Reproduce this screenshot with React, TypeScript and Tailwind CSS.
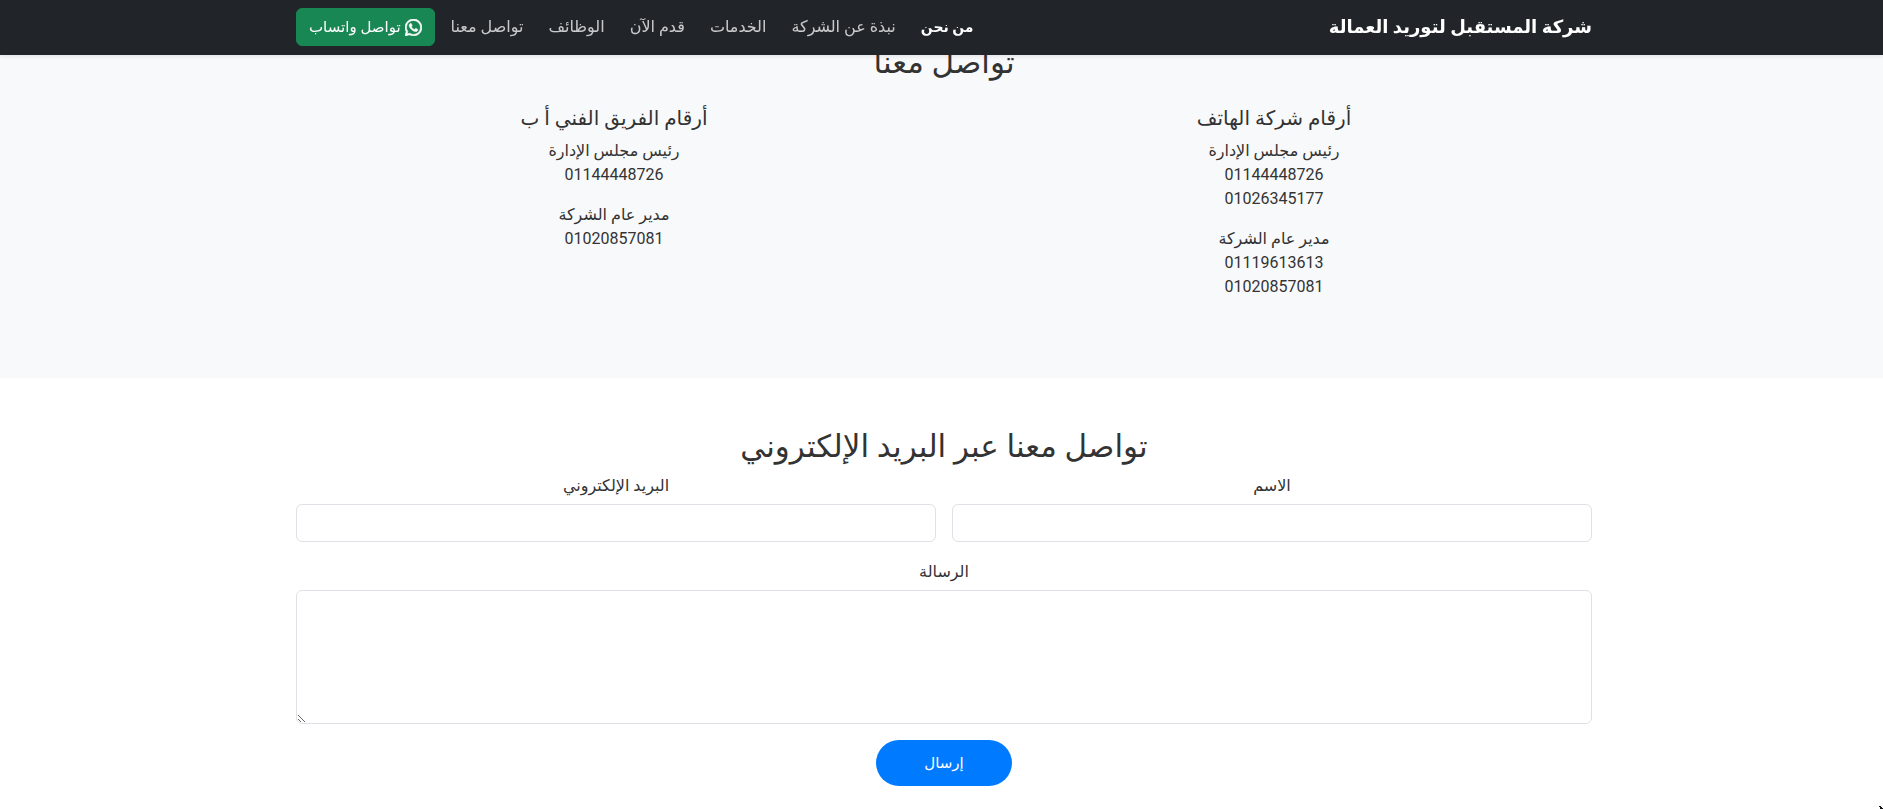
import React from 'react';
import { BsWhatsapp } from 'react-icons/bs';

interface NavItem {
  label: string;
  href: string;
  active?: boolean;
}

interface ContactGroup {
  title: string;
  people: { role: string; phones: string[] }[];
}

const navItems: NavItem[] = [
  { label: 'من نحن', href: '#about', active: true },
  { label: 'نبذة عن الشركة', href: '#company' },
  { label: 'الخدمات', href: '#services' },
  { label: 'قدم الآن', href: '#apply' },
  { label: 'الوظائف', href: '#jobs' },
  { label: 'تواصل معنا', href: '#contact' },
];

const contactGroups: ContactGroup[] = [
  {
    title: 'أرقام شركة الهاتف',
    people: [
      { role: 'رئيس مجلس الإدارة', phones: ['01144448726', '01026345177'] },
      { role: 'مدير عام الشركة', phones: ['01119613613', '01020857081'] },
    ],
  },
  {
    title: 'أرقام الفريق الفني أ ب',
    people: [
      { role: 'رئيس مجلس الإدارة', phones: ['01144448726'] },
      { role: 'مدير عام الشركة', phones: ['01020857081'] },
    ],
  },
];

const Navbar: React.FC = () => (
  <header className="fixed inset-x-0 top-0 z-10 bg-[#212529] pl-[5px] shadow-[0_2px_4px_rgba(0,0,0,0.08)]">
    <div className="mx-auto flex max-w-[1320px] items-center justify-between px-3 pt-2 pb-[9px]">
      <a href="#home" className="text-[18px] leading-[30px] font-bold text-white">
        شركة المستقبل لتوريد العمالة
      </a>
      <nav className="flex items-center gap-4">
        <ul className="flex items-center gap-[25px]">
          {navItems.map((item) => (
            <li key={item.href}>
              <a
                href={item.href}
                className={item.active ? 'text-[14px] font-bold text-white' : 'text-white/75 hover:text-white'}
              >
                {item.label}
              </a>
            </li>
          ))}
        </ul>
        <a
          href="#whatsapp"
          className="flex items-center gap-1 rounded-md border border-[#198754] bg-[#198754] px-3 py-[6px] text-[15px] text-white"
        >
          <BsWhatsapp className="size-[17px] stroke-white stroke-[0.6]" />
          تواصل واتساب
        </a>
      </nav>
    </div>
  </header>
);

const ContactNumbers: React.FC = () => (
  <section id="contact" className="bg-[#f8f9fb] pt-11 pb-[63px] pl-[5px] text-center">
    <div className="mx-auto max-w-[1320px]">
      <h2 className="mb-6 text-[31px] leading-[38px]">تواصل معنا</h2>
      <div className="grid grid-cols-2">
        {contactGroups.map((group) => (
          <div key={group.title}>
            <h5 className="mb-[9px] text-[20px] leading-6">{group.title}</h5>
            {group.people.map((person) => (
              <p key={person.role} className="mb-4">
                <strong className="font-medium">{person.role}</strong>
                {person.phones.map((phone) => (
                  <span key={phone} className="block">{phone}</span>
                ))}
              </p>
            ))}
          </div>
        ))}
      </div>
    </div>
  </section>
);

const ContactForm: React.FC = () => (
  <section id="email" className="bg-white pt-[50px] pb-5 pl-[5px] text-center">
    <div className="mx-auto max-w-[1320px] px-3">
      <h2 className="mb-2 text-[31px] leading-[38px]">تواصل معنا عبر البريد الإلكتروني</h2>
      <form onSubmit={(e) => e.preventDefault()}>
        <div className="grid grid-cols-2 gap-4">
          <div>
            <label htmlFor="name" className="mb-[6px] block">الاسم</label>
            <input
              id="name"
              type="text"
              className="block h-[38px] w-full rounded-md border border-[#dee2e6] bg-white px-3"
            />
          </div>
          <div>
            <label htmlFor="mail" className="mb-[6px] block">البريد الإلكتروني</label>
            <input
              id="mail"
              type="email"
              className="block h-[38px] w-full rounded-md border border-[#dee2e6] bg-white px-3"
            />
          </div>
        </div>
        <label htmlFor="message" className="mt-[18px] mb-[6px] block">الرسالة</label>
        <textarea
          id="message"
          rows={5}
          className="block w-full resize rounded-md border border-[#dee2e6] bg-white px-3 py-[6px]"
        />
        <button
          type="submit"
          className="mt-4 rounded-full bg-[#007bff] px-12 py-[11px] text-[15px] text-white hover:bg-blue-700"
        >
          إرسال
        </button>
      </form>
    </div>
  </section>
);

const App: React.FC = () => (
  <div
    dir="rtl"
    className="bg-white font-[Roboto,'DejaVu_Sans',sans-serif] text-[16px] leading-6 text-[#333333]"
  >
    <Navbar />
    <main>
      <ContactNumbers />
      <ContactForm />
    </main>
    <svg className="fixed right-0 bottom-0 h-[3px] w-[4px]" viewBox="0 0 4 3" aria-hidden="true">
      <path d="M0 0h2v1h1v1h1v1H1V1H0z" fill="#111111" />
    </svg>
  </div>
);

export default App;
